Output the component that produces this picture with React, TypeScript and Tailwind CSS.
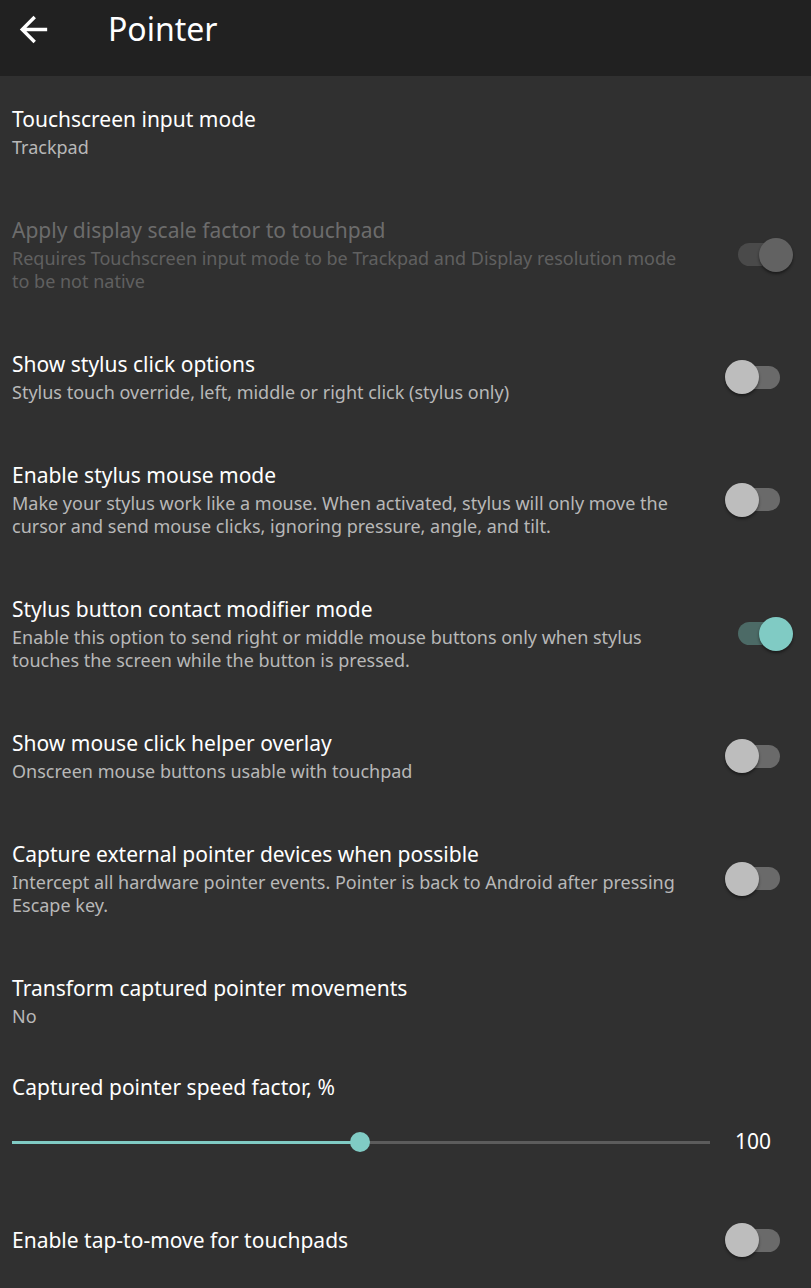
import React from 'react'

const FONT = { fontFamily: '"Noto Sans", "Open Sans", sans-serif' }

type Pref = {
  title: string
  summary?: string
  toggle?: 'on' | 'off' | 'disabled-on'
  disabled?: boolean
}

const prefs: Pref[] = [
  { title: 'Touchscreen input mode', summary: 'Trackpad' },
  {
    title: 'Apply display scale factor to touchpad',
    summary: 'Requires Touchscreen input mode to be Trackpad and Display resolution mode to be not native',
    toggle: 'disabled-on',
    disabled: true,
  },
  {
    title: 'Show stylus click options',
    summary: 'Stylus touch override, left, middle or right click (stylus only)',
    toggle: 'off',
  },
  {
    title: 'Enable stylus mouse mode',
    summary: 'Make your stylus work like a mouse. When activated, stylus will only move the cursor and send mouse clicks, ignoring pressure, angle, and tilt.',
    toggle: 'off',
  },
  {
    title: 'Stylus button contact modifier mode',
    summary: 'Enable this option to send right or middle mouse buttons only when stylus touches the screen while the button is pressed.',
    toggle: 'on',
  },
  {
    title: 'Show mouse click helper overlay',
    summary: 'Onscreen mouse buttons usable with touchpad',
    toggle: 'off',
  },
  {
    title: 'Capture external pointer devices when possible',
    summary: 'Intercept all hardware pointer events. Pointer is back to Android after pressing Escape key.',
    toggle: 'off',
  },
  { title: 'Transform captured pointer movements', summary: 'No' },
]

function Toggle({ state }: { state: 'on' | 'off' | 'disabled-on' }) {
  const on = state !== 'off'
  const track =
    state === 'on' ? 'bg-[#4c6a66]' : state === 'disabled-on' ? 'bg-[#4a4a4a]' : 'bg-[#6a6a6a]'
  const thumb =
    state === 'on' ? 'bg-[#80cbc4]' : state === 'disabled-on' ? 'bg-[#626262]' : 'bg-[#bdbdbd]'
  return (
    <div className="relative w-[68px] h-[34px] shrink-0">
      <div className={`absolute left-[13px] top-[5.5px] w-[42px] h-[23px] rounded-full ${track}`} />
      <div
        className={`absolute top-0 size-[34px] rounded-full shadow-[0_2px_3px_rgba(0,0,0,0.45)] ${thumb} ${
          on ? 'left-[34px]' : 'left-0'
        }`}
      />
    </div>
  )
}

function PrefRow({ pref }: { pref: Pref }) {
  return (
    <div className="flex items-center pl-3 pr-[18px] pt-[29px] pb-[28px]">
      <div className="flex-1 min-w-0 pr-[34px]">
        <div
          className={`text-[21px] leading-[28px] ${pref.disabled ? 'text-[#6c6c6c]' : 'text-white'}`}
        >
          {pref.title}
        </div>
        {pref.summary && (
          <div
            className={`mt-[3px] text-[18px] leading-[23px] ${
              pref.disabled ? 'text-[#606060]' : 'text-[#b8b8b8]'
            }`}
          >
            {pref.summary}
          </div>
        )}
      </div>
      {pref.toggle && <Toggle state={pref.toggle} />}
    </div>
  )
}

export default function App() {
  return (
    <div className="w-[811px] h-[1288px] overflow-hidden bg-[#303030]" style={FONT}>
      <header className="h-[76px] bg-[#212121] flex items-center">
        <div className="w-[108px] flex items-center pl-[13px] -mt-[18px]">
          <svg width="41" height="41" viewBox="0 0 24 24" fill="#ffffff">
            <path d="M20 11H7.83l5.59-5.59L12 4l-8 8 8 8 1.41-1.41L7.83 13H20v-2z" />
          </svg>
        </div>
        <h1 className="text-[32px] leading-none text-white -mt-[18px]">Pointer</h1>
      </header>

      {prefs.map((p) => (
        <PrefRow key={p.title} pref={p} />
      ))}

      <div className="pl-3 pr-[40px] pt-[17px]">
        <div className="text-[21px] leading-[28px] text-white">Captured pointer speed factor, %</div>
        <div className="flex items-center h-[56px] mt-[13px]">
          <div className="relative flex-1 h-[20px] flex items-center">
            <div className="w-full h-[3px] bg-[#5c5c5c]" />
            <div className="absolute left-0 top-[8.5px] w-[348px] h-[3px] bg-[#80cbc4]" />
            <div className="absolute left-[338px] top-0 size-[20px] rounded-full bg-[#80cbc4]" />
          </div>
          <div className="w-[61px] text-right text-[21px] text-white">100</div>
        </div>
      </div>

      <div className="flex items-center pl-3 pr-[18px] pt-[53px]">
        <div className="flex-1 text-[21px] leading-[28px] text-white">Enable tap-to-move for touchpads</div>
        <Toggle state="off" />
      </div>
    </div>
  )
}
